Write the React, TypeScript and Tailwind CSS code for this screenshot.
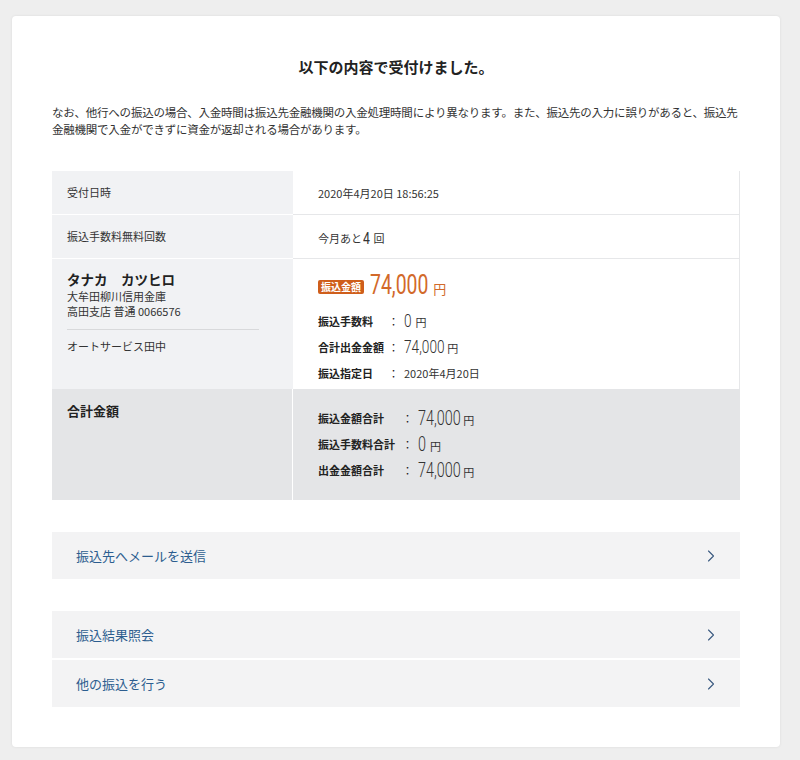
import { ChevronRight } from 'lucide-react';

// condensed digits: Roboto squeezed horizontally, negative margin gives back the width
function Num({ value, size, className = '' }: { value: string; size: 'sm' | 'md' | 'lg' | 'xs'; className?: string }) {
  const cls = {
    xs: 'text-[17px]',
    sm: 'text-[19px]',
    md: 'text-[20px]',
    lg: 'text-[27px]',
  }[size];
  const shrink = value.length > 2 ? (size === 'lg' ? '-mr-[24px]' : size === 'md' ? '-mr-[19px]' : '-mr-[18px]') : '-mr-[4px]';
  return (
    <span className={`inline-block origin-left scale-x-[0.72] leading-none font-['Roboto',sans-serif] font-light ${cls} ${shrink} ${className}`}>
      {value}
    </span>
  );
}

function Yen({ value, big }: { value: string; big?: boolean }) {
  return (
    <span className="inline-flex items-baseline gap-[5px] text-[#333]">
      <Num value={value} size={big ? 'md' : 'sm'} />
      <span className="text-[11px]">円</span>
    </span>
  );
}

function Detail({ label, children, labelW }: { label: string; children: React.ReactNode; labelW: string }) {
  return (
    <div className="flex items-center h-[26px]">
      <span className={`${labelW} text-[11px] font-bold text-[#222]`}>{label}</span>
      <span className="text-[11px] mr-[5px] text-[#222]">：</span>
      {children}
    </div>
  );
}

function LinkRow({ label }: { label: string }) {
  return (
    <button className="w-full h-[47px] flex items-center justify-between bg-[#f3f3f4] pl-6 pr-[19px] text-left">
      <span className="text-[13px] text-[#2c5d8f]">{label}</span>
      <ChevronRight size={20} strokeWidth={1.3} className="text-[#3a5a80]" />
    </button>
  );
}

export default function App() {
  return (
    <div className="min-h-[760px] bg-[#eeeeee] pt-4 pl-3 pr-5 pb-3 font-['Noto_Sans_CJK_JP',sans-serif]">
      <div className="w-[768px] bg-white rounded shadow-[0_0_3px_rgba(0,0,0,0.08)] px-10 pt-[39px] pb-10">
        <h1 className="text-center text-[15px] font-bold text-[#222] leading-6">以下の内容で受付けました。</h1>

        <p className="mt-[25px] text-[11.5px] leading-[17px] text-[#333] tracking-[-0.02em]">
          なお、他行への振込の場合、入金時間は振込先金融機関の入金処理時間により異なります。また、振込先の入力に誤りがあると、振込先金融機関で入金ができずに資金が返却される場合があります。
        </p>

        <div className="mt-[33px] text-[#333]">
          <div className="flex h-[44px]">
            <div className="w-[241px] bg-[#f1f2f4] border-b border-white flex items-center pl-[15px] text-[11px]">受付日時</div>
            <div className="flex-1 border-b border-r border-[#e6e7e9] flex items-center pl-[25px] pt-[2px] text-[11px]">2020年4月20日 18:56:25</div>
          </div>
          <div className="flex h-[44px]">
            <div className="w-[241px] bg-[#f1f2f4] border-b border-white flex items-center pl-[15px] text-[11px]">振込手数料無料回数</div>
            <div className="flex-1 border-b border-r border-[#e6e7e9] flex items-center pl-[25px] pt-[4px] text-[11px]">
              今月あと<Num value="4" size="xs" className="ml-[1px] mr-[1px] font-normal" />回
            </div>
          </div>
          <div className="flex h-[130px]">
            <div className="w-[241px] bg-[#f1f2f4] pl-[15px] pr-[34px] pt-[10px]">
              <div className="text-[13.5px] font-bold text-[#222] leading-5">タナカ　カツヒロ</div>
              <div className="text-[11px] leading-[15px]">大牟田柳川信用金庫</div>
              <div className="text-[11px] leading-[15px]">高田支店 普通 0066576</div>
              <div className="mt-[10px] border-t border-[#d8d9db]" />
              <div className="mt-[8px] text-[11px]">オートサービス田中</div>
            </div>
            <div className="flex-1 border-r border-[#e6e7e9] pl-[25px] pt-[13px]">
              <div className="flex items-baseline gap-[6px]">
                <span className="bg-[#cf5e1b] text-white text-[10px] font-bold px-[3px] leading-[14px] rounded-[2px] relative -top-[3px]">振込金額</span>
                <Num value="74,000" size="lg" className="text-[#d2692a] font-normal" />
                <span className="text-[13px] text-[#d2692a]">円</span>
              </div>
              <div className="mt-[9px]">
                <Detail label="振込手数料" labelW="w-[70px]"><Yen value="0" /></Detail>
                <Detail label="合計出金金額" labelW="w-[70px]"><Yen value="74,000" /></Detail>
                <Detail label="振込指定日" labelW="w-[70px]"><span className="text-[11px]">2020年4月20日</span></Detail>
              </div>
            </div>
          </div>
          <div className="flex h-[111px] bg-[#e4e5e7]">
            <div className="w-[241px] pl-[15px] pt-[12px] text-[13px] font-bold text-[#222] border-r border-white">合計金額</div>
            <div className="flex-1 pl-[25px] pt-[16px]">
              <Detail label="振込金額合計" labelW="w-[84px]"><Yen value="74,000" big /></Detail>
              <Detail label="振込手数料合計" labelW="w-[84px]"><Yen value="0" big /></Detail>
              <Detail label="出金金額合計" labelW="w-[84px]"><Yen value="74,000" big /></Detail>
            </div>
          </div>
        </div>

        <div className="mt-8">
          <LinkRow label="振込先へメールを送信" />
        </div>
        <div className="mt-8 flex flex-col gap-[2px]">
          <LinkRow label="振込結果照会" />
          <LinkRow label="他の振込を行う" />
        </div>
      </div>
    </div>
  );
}
